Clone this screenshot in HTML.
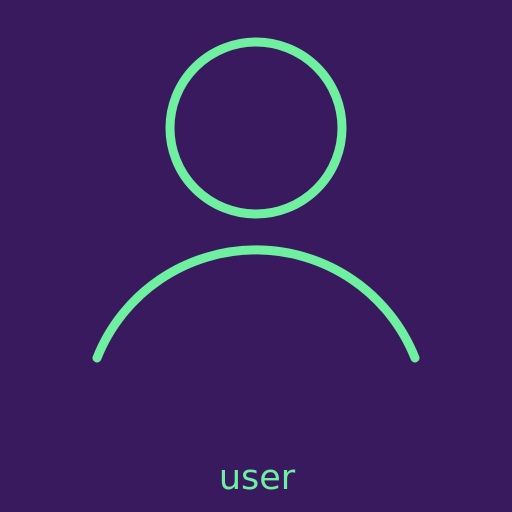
<!DOCTYPE html>
<html><head><style>
html,body{margin:0;padding:0;width:512px;height:512px;background:#391a5f;overflow:hidden}
</style></head><body>
<svg width="512" height="512" viewBox="0 0 512 512" xmlns="http://www.w3.org/2000/svg">
<rect width="512" height="512" fill="#391a5f"/>
<circle cx="256" cy="128" r="86" fill="none" stroke="#6ef0a0" stroke-width="9"/>
<path d="M97 358 A171 171 0 0 1 415 358" fill="none" stroke="#6ef0a0" stroke-width="9" stroke-linecap="round"/>
<text x="257" y="489" text-anchor="middle" font-family="DejaVu Sans, sans-serif" font-size="35" fill="#6ef0a0">user</text>
</svg>
</body></html>
